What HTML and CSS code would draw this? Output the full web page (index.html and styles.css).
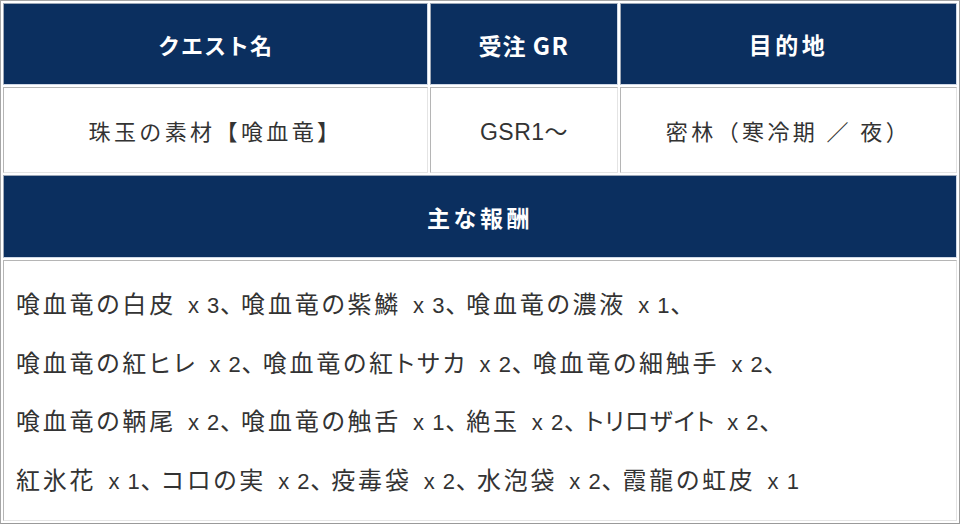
FILE: index.html
```html
<!DOCTYPE html>
<html lang="ja">
<head>
<meta charset="utf-8">
<link rel="stylesheet" href="styles.css">
</head>
<body>
<table class="quest">
  <tr class="row-head">
    <th class="c1">クエスト名</th>
    <th class="c2">受注 <span class="gr">GR</span></th>
    <th class="c3">目的地</th>
  </tr>
  <tr class="row-data">
    <td>珠玉の素材【喰血竜】</td>
    <td class="latin">GSR1〜</td>
    <td>密林（寒冷期 ／ 夜）</td>
  </tr>
  <tr class="row-head row-head-2">
    <th colspan="3">主な報酬</th>
  </tr>
  <tr class="row-reward">
    <td colspan="3" class="rewards">
      <p>喰血竜の白皮<span class="qty">x 3</span><span class="sep">、</span>喰血竜の紫鱗<span class="qty">x 3</span><span class="sep">、</span>喰血竜の濃液<span class="qty">x 1</span><span class="sep">、</span></p>
      <p>喰血竜の紅ヒレ<span class="qty">x 2</span><span class="sep">、</span>喰血竜の紅トサカ<span class="qty">x 2</span><span class="sep">、</span>喰血竜の細触手<span class="qty">x 2</span><span class="sep">、</span></p>
      <p>喰血竜の鞆尾<span class="qty">x 2</span><span class="sep">、</span>喰血竜の触舌<span class="qty">x 1</span><span class="sep">、</span>絶玉<span class="qty">x 2</span><span class="sep">、</span><span class="kana">トリロザイト</span><span class="qty">x 2</span><span class="sep">、</span></p>
      <p>紅氷花<span class="qty">x 1</span><span class="sep">、</span>コロの実<span class="qty">x 2</span><span class="sep">、</span>疫毒袋<span class="qty">x 2</span><span class="sep">、</span>水泡袋<span class="qty">x 2</span><span class="sep">、</span>霞龍の虹皮<span class="qty">x 1</span></p>
    </td>
  </tr>
</table>
</body>
</html>
```

FILE: styles.css
```css
html, body {
  margin: 0;
  padding: 0;
  background: #ffffff;
}

body {
  font-family: "Noto Sans CJK JP", "Noto Sans", sans-serif;
  color: #333333;
}

.quest {
  width: 960px;
  border-collapse: separate;
  border-spacing: 2px;
  border: 1px solid #a6a6a6;
  border-right-color: #9a9a9a;
  border-bottom-color: #9a9a9a;
}

.quest th,
.quest td {
  padding: 0;
  text-align: center;
  vertical-align: middle;
  border: 1px solid;
  border-color: #b5b5b5 #e4e4e4 #e4e4e4 #b5b5b5;
}

.quest th {
  background: #0b2f5f;
  color: #ffffff;
  font-size: 23px;
  font-weight: 700;
  letter-spacing: 3.5px;
  height: 80px;
  border-color: #9fa9b8 #cfd8e6 #cfd8e6 #9fa9b8;
}

.quest th.c1 {
  font-size: 22px;
  letter-spacing: 1px;
}

.quest th.c2 {
  letter-spacing: 1px;
}

.gr {
  font-size: 24px;
  letter-spacing: 1.5px;
}

.row-head-2 th {
  height: 81px;
}

.c1 { width: 423px; }
.c2 { width: 186px; }

.row-data td {
  height: 84px;
  font-size: 22px;
  letter-spacing: 3.4px;
  font-weight: 400;
}

.latin {
  font-family: "Liberation Sans", "Noto Sans CJK JP", sans-serif;
}

.row-data td.latin {
  font-size: 23px;
  letter-spacing: 0.5px;
}

.rewards {
  text-align: left !important;
  padding: 13px 14px 12px 12px !important;
}

.rewards p {
  margin: 0;
  font-size: 24px;
  letter-spacing: 2.8px;
  line-height: 58.5px;
  white-space: nowrap;
  font-feature-settings: "palt";
}

.kana {
  letter-spacing: 1px;
}

.qty {
  font-family: "Liberation Sans", sans-serif;
  font-size: 22px;
  line-height: 1;
  letter-spacing: 0;
  word-spacing: 2px;
  margin-left: 12px;
  margin-right: 1px;
}

.sep {
  margin-right: 6px;
}
```
